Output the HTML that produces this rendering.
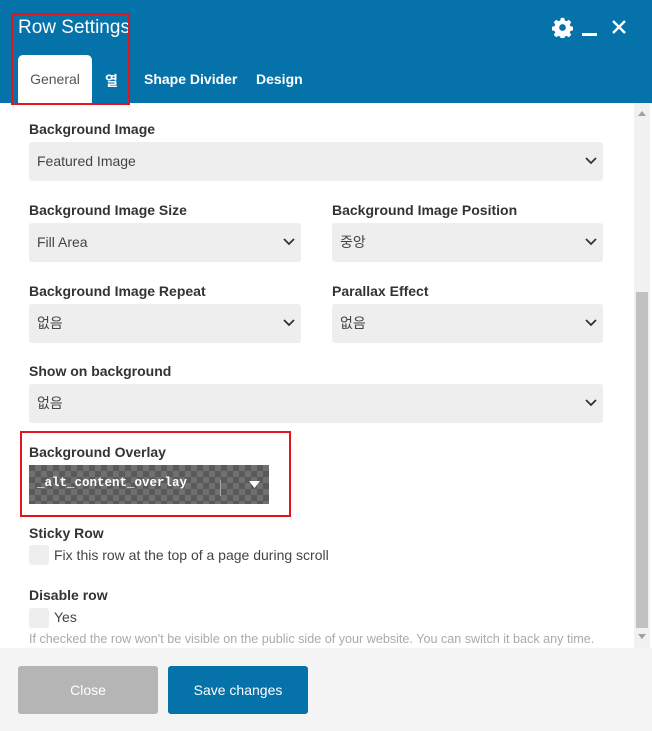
<!DOCTYPE html><html><head><meta charset="utf-8"><style>
*{box-sizing:border-box;margin:0;padding:0}
body{width:652px;height:731px;overflow:hidden;background:#fff;font-family:"Liberation Sans","Noto Sans CJK KR",sans-serif;position:relative;color:#333}
.hd{position:absolute;left:0;top:0;width:652px;height:103px;background:#0572aa}
.t{position:absolute;left:18px;top:17px;font-size:19px;color:#fff}
.tab{position:absolute;top:71px;font-size:14px;color:#fff;font-weight:bold}
.gen{position:absolute;left:18px;top:55px;width:74px;height:48px;background:#fff;border-radius:5px 5px 0 0;color:#555;font-size:14px;text-align:center;line-height:48px}
.red{position:absolute;border:2px solid #e2141e}
.lb{position:absolute;font-size:14px;font-weight:bold;color:#333}
.sel{position:absolute;height:39px;background:#eee;border-radius:3px;font-size:14px;color:#444;padding-left:8px;line-height:39px}
.sel svg{position:absolute;right:6px;top:14px}
.cb{position:absolute;left:29px;width:20px;height:20px;background:#eee;border-radius:3px}
.tx{position:absolute;font-size:14px;color:#444}
.sb{position:absolute;left:634px;top:103px;width:16px;height:545px;background:#f1f1f1}
.th{position:absolute;left:636px;top:292px;width:12px;height:336px;background:#c1c1c1}
.ft{position:absolute;left:0;top:648px;width:652px;height:83px;background:#f4f4f4}
.btn{position:absolute;top:666px;height:48px;border-radius:3px;color:#fff;font-size:14px;text-align:center;line-height:48px}
</style></head><body>
<div class="hd">
<div class="t">Row Settings</div>
<div class="gen">General</div>
<div class="tab" style="left:105px;color:#fff">열</div>
<div class="tab" style="left:144px">Shape Divider</div>
<div class="tab" style="left:256px">Design</div>
<svg style="position:absolute;left:552px;top:17px" width="21" height="21" viewBox="0 0 24 24"><path fill="#fff" d="M10 1h4l.6 3 2 .9 2.6-1.7 2.8 2.8-1.7 2.6.9 2 3 .6v4l-3 .6-.9 2 1.7 2.6-2.8 2.8-2.6-1.7-2 .9-.6 3h-4l-.6-3-2-.9-2.6 1.7-2.8-2.8 1.7-2.6-.9-2-3-.6v-4l3-.6.9-2-1.7-2.6 2.8-2.8 2.6 1.7 2-.9z"/><circle cx="12" cy="12" r="3.8" fill="#0572aa"/></svg>
<div style="position:absolute;left:582px;top:33px;width:15px;height:3px;background:#fff"></div>
<svg style="position:absolute;left:611px;top:19px" width="16" height="16"><path d="M2 2L14 14M14 2L2 14" stroke="#fff" stroke-width="2.4"/></svg>
</div>
<div class="red" style="left:11px;top:13px;width:119px;height:92px"></div>
<div class="sb"></div><div class="th"></div>
<svg style="position:absolute;left:638px;top:110px" width="8" height="6"><path d="M0 6L4 1 8 6z" fill="#a0a0a0"/></svg>
<svg style="position:absolute;left:638px;top:634px" width="8" height="6"><path d="M0 0L4 5 8 0z" fill="#a0a0a0"/></svg>

<div class="lb" style="left:29px;top:121px">Background Image</div>
<div class="sel" style="left:29px;top:142px;width:574px">Featured Image<svg width="12" height="10"><path d="M1 2l5 5 5-5" stroke="#333" stroke-width="1.8" fill="none"/></svg></div>
<div class="lb" style="left:29px;top:202px">Background Image Size</div>
<div class="sel" style="left:29px;top:223px;width:272px">Fill Area<svg width="12" height="10"><path d="M1 2l5 5 5-5" stroke="#333" stroke-width="1.8" fill="none"/></svg></div>
<div class="lb" style="left:332px;top:202px">Background Image Position</div>
<div class="sel" style="left:332px;top:223px;width:271px">중앙<svg width="12" height="10"><path d="M1 2l5 5 5-5" stroke="#333" stroke-width="1.8" fill="none"/></svg></div>
<div class="lb" style="left:29px;top:283px">Background Image Repeat</div>
<div class="sel" style="left:29px;top:304px;width:272px">없음<svg width="12" height="10"><path d="M1 2l5 5 5-5" stroke="#333" stroke-width="1.8" fill="none"/></svg></div>
<div class="lb" style="left:332px;top:283px">Parallax Effect</div>
<div class="sel" style="left:332px;top:304px;width:271px">없음<svg width="12" height="10"><path d="M1 2l5 5 5-5" stroke="#333" stroke-width="1.8" fill="none"/></svg></div>
<div class="lb" style="left:29px;top:363px">Show on background</div>
<div class="sel" style="left:29px;top:384px;width:574px">없음<svg width="12" height="10"><path d="M1 2l5 5 5-5" stroke="#333" stroke-width="1.8" fill="none"/></svg></div>

<div class="red" style="left:20px;top:431px;width:271px;height:86px"></div>
<div class="lb" style="left:29px;top:444px">Background Overlay</div>
<div style="position:absolute;left:29px;top:465px;width:240px;height:39px;background-color:#5a5a5a;background-image:linear-gradient(45deg,#707070 25%,transparent 25%,transparent 75%,#707070 75%),linear-gradient(45deg,#707070 25%,transparent 25%,transparent 75%,#707070 75%);background-size:12px 12px;background-position:0 0,6px 6px"></div>
<div style="position:absolute;left:37px;top:476px;font-family:'Liberation Mono',monospace;font-size:12.5px;font-weight:bold;color:#fff">_alt_content_overlay</div>
<div style="position:absolute;left:220px;top:480px;width:1px;height:16px;background:#aaa"></div>
<svg style="position:absolute;left:249px;top:481px" width="12" height="8"><path d="M0 0h11L5.5 7z" fill="#fff"/></svg>

<div class="lb" style="left:29px;top:525px">Sticky Row</div>
<div class="cb" style="top:545px"></div>
<div class="tx" style="left:54px;top:547px">Fix this row at the top of a page during scroll</div>
<div class="lb" style="left:29px;top:587px">Disable row</div>
<div class="cb" style="top:608px"></div>
<div class="tx" style="left:54px;top:609px">Yes</div>
<div class="tx" style="left:29px;top:632px;font-size:12.6px;color:#aaa">If checked the row won't be visible on the public side of your website. You can switch it back any time.</div>

<div class="ft"></div>
<div class="btn" style="left:18px;width:140px;background:#b5b5b5">Close</div>
<div class="btn" style="left:168px;width:140px;background:#0572aa">Save changes</div>
</body></html>
